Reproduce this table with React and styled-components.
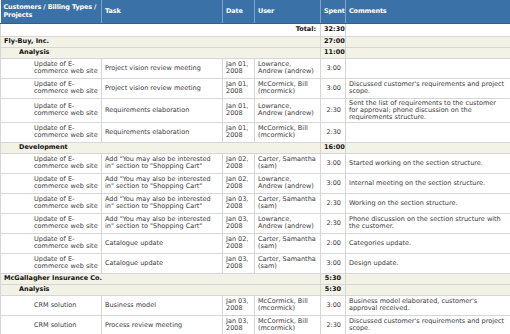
import React from "react";
import styled, { createGlobalStyle } from "styled-components";

const GlobalStyle = createGlobalStyle`
  body {
    margin: 0;
    background: #fff;
    font-family: "DejaVu Sans", Verdana, sans-serif;
  }
`;

const Table = styled.table`
  width: 510px;
  border-collapse: collapse;
  table-layout: fixed;
  font-size: 6.5px;
  line-height: 7px;
  color: #3a3a3a;
`;

const HeadRow = styled.tr`
  height: 23px;
`;

const HeadCell = styled.th`
  background: #3a72a8;
  color: #fff;
  font-weight: bold;
  text-align: left;
  vertical-align: middle;
  padding: 2px 2px 2px 3px;
  line-height: 8px;
  letter-spacing: -0.15px;
  border-left: 1px solid #7fa3c8;
  border-right: 1px solid #7fa3c8;
  border-bottom: 1px solid #2f5f8d;

  &:first-child {
    border-left: none;
  }
`;

const rowHeights = { data: 20, group: 11, total: 13 };

const Row = styled.tr`
  height: ${(p) => rowHeights[p.$kind || "data"]}px;
  background: ${(p) => (p.$kind === "group" ? "#f3f2e6" : "#fff")};
`;

const Cell = styled.td`
  border: 1px solid #d6d6d6;
  padding: 1px 3px;
  padding-left: ${(p) => p.$indent || 3}px;
  padding-right: ${(p) => (p.$align === "right" ? 4 : 3)}px;
  text-align: ${(p) => p.$align || "left"};
  vertical-align: middle;
  font-weight: ${(p) => (p.$bold ? "bold" : "normal")};
  color: ${(p) => (p.$bold ? "#111" : "#3a3a3a")};
`;

const ADD = 'Add "You may also be interested in" section to "Shopping Cart"';
const ECOM = "Update of E-commerce web site";
const ANDREW = "Lowrance, Andrew (andrew)";
const BILL = "McCormick, Bill (mcormick)";
const SAM = "Carter, Samantha (sam)";

const data = [
  {
    customer: "Fly-Buy, Inc.",
    spent: "27:00",
    types: [
      {
        name: "Analysis",
        spent: "11:00",
        rows: [
          [ECOM, "Project vision review meeting", "Jan 01, 2008", ANDREW, "3:00", ""],
          [ECOM, "Project vision review meeting", "Jan 01, 2008", BILL, "3:00", "Discussed customer's requirements and project scope."],
          [ECOM, "Requirements elaboration", "Jan 01, 2008", ANDREW, "2:30", "Sent the list of requirements to the customer for approval; phone discussion on the requirements structure."],
          [ECOM, "Requirements elaboration", "Jan 01, 2008", BILL, "2:30", ""],
        ],
      },
      {
        name: "Development",
        spent: "16:00",
        rows: [
          [ECOM, ADD, "Jan 02, 2008", SAM, "3:00", "Started working on the section structure."],
          [ECOM, ADD, "Jan 02, 2008", ANDREW, "3:00", "Internal meeting on the section structure."],
          [ECOM, ADD, "Jan 03, 2008", SAM, "2:30", "Working on the section structure."],
          [ECOM, ADD, "Jan 03, 2008", ANDREW, "2:30", "Phone discussion on the section structure with the customer."],
          [ECOM, "Catalogue update", "Jan 02, 2008", SAM, "2:00", "Categories update."],
          [ECOM, "Catalogue update", "Jan 03, 2008", SAM, "3:00", "Design update."],
        ],
      },
    ],
  },
  {
    customer: "McGallagher Insurance Co.",
    spent: "5:30",
    types: [
      {
        name: "Analysis",
        spent: "5:30",
        rows: [
          ["CRM solution", "Business model", "Jan 03, 2008", BILL, "3:00", "Business model elaborated, customer's approval received."],
          ["CRM solution", "Process review meeting", "Jan 03, 2008", BILL, "2:30", "Discussed customer's requirements and project scope."],
        ],
      },
    ],
  },
];

const GroupRow = ({ label, spent, indent }) => (
  <Row $kind="group">
    <Cell colSpan={4} $bold $indent={indent}>{label}</Cell>
    <Cell $bold $align="right">{spent}</Cell>
    <Cell />
  </Row>
);

export default function App() {
  return (
    <>
      <GlobalStyle />
      <Table>
        <colgroup>
          <col style={{ width: 101 }} />
          <col style={{ width: 121 }} />
          <col style={{ width: 32 }} />
          <col style={{ width: 66 }} />
          <col style={{ width: 25 }} />
          <col style={{ width: 165 }} />
        </colgroup>
        <thead>
          <HeadRow>
            <HeadCell>Customers / Billing Types / Projects</HeadCell>
            <HeadCell>Task</HeadCell>
            <HeadCell>Date</HeadCell>
            <HeadCell>User</HeadCell>
            <HeadCell>Spent</HeadCell>
            <HeadCell>Comments</HeadCell>
          </HeadRow>
        </thead>
        <tbody>
          <Row $kind="total">
            <Cell colSpan={4} $bold $align="right">Total:</Cell>
            <Cell $bold $align="right">32:30</Cell>
            <Cell />
          </Row>
          {data.map((c) => (
            <React.Fragment key={c.customer}>
              <GroupRow label={c.customer} spent={c.spent} indent={3} />
              {c.types.map((t) => (
                <React.Fragment key={t.name}>
                  <GroupRow label={t.name} spent={t.spent} indent={18} />
                  {t.rows.map((r, i) => (
                    <Row key={i}>
                      <Cell $indent={33}>{r[0]}</Cell>
                      <Cell>{r[1]}</Cell>
                      <Cell>{r[2]}</Cell>
                      <Cell>{r[3]}</Cell>
                      <Cell $align="right">{r[4]}</Cell>
                      <Cell>{r[5]}</Cell>
                    </Row>
                  ))}
                </React.Fragment>
              ))}
            </React.Fragment>
          ))}
        </tbody>
      </Table>
    </>
  );
}
